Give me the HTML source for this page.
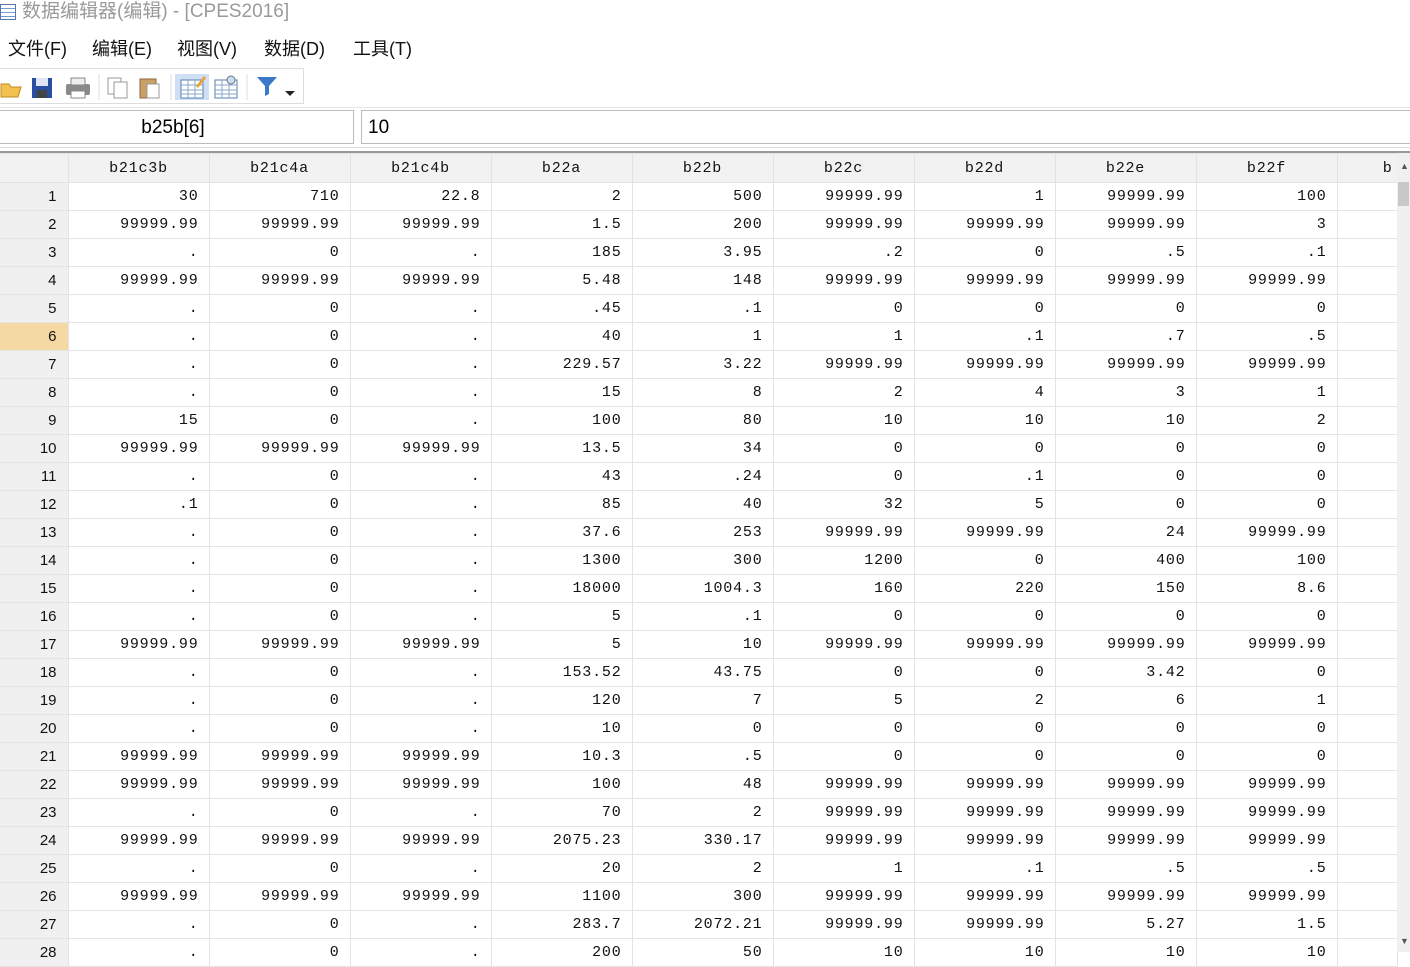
<!DOCTYPE html>
<html><head><meta charset="utf-8"><style>
*{margin:0;padding:0;box-sizing:border-box}
body{width:1410px;height:952px;overflow:hidden;background:#fff;font-family:"Liberation Sans","Noto Sans CJK SC",sans-serif;position:relative}
.title{position:absolute;left:0;top:0;height:24px;font-size:19px;color:#9a9a9a;line-height:24px}
.title .ic{position:absolute;left:0;top:4px;width:16px;height:16px;border:1px solid #5577aa;background:repeating-linear-gradient(#fff 0 3px,#7799cc 3px 4px)}
.title span{position:absolute;left:22px;white-space:nowrap}
.menu{position:absolute;top:35px;left:0;font-size:18px;color:#111;white-space:nowrap}
.menu span{position:absolute}
.tb{position:absolute;left:-2px;top:68px;width:306px;height:36px;border:1px solid #ddd;background:#fff}
.ico{position:absolute}
.inp{position:absolute;top:110px;height:34px;border:1px solid #bbb;background:#fff;font-size:19px;line-height:34px}
.sep{position:absolute;left:0;width:1410px;height:1px}
table{position:absolute;left:0;top:153px;border-collapse:collapse;table-layout:fixed;font-family:"Liberation Mono",monospace;font-size:15px;letter-spacing:0.8px}
td{height:28px;border:1px solid #e3e3e3;text-align:right;padding-right:10px;color:#111;white-space:nowrap;overflow:hidden}
td:first-child{background:#f0f0f0;font-family:"Liberation Sans",sans-serif;font-size:15px;letter-spacing:0;padding-right:11px;border-left:none}
tr.h td{background:#f2f2f2;text-align:center;height:29px;padding:0}
tr.h td:last-child{text-align:right;padding-right:4px}
tr.sel td:first-child{background:#f5d9a3}
.sb{position:absolute;left:1397px;top:153px;width:13px;height:799px;background:#f0f0f0}
</style></head><body>
<div class="title"><div class="ic"></div><span>数据编辑器(编辑) - [CPES2016]</span></div>
<div class="menu"><span style="left:8px">文件(F)</span><span style="left:92px">编辑(E)</span><span style="left:177px">视图(V)</span><span style="left:264px">数据(D)</span><span style="left:353px">工具(T)</span></div>
<div class="tb">
<svg class="ico" style="left:0;top:5px" width="300" height="26" viewBox="0 0 300 26">
<path d="M2 10h8l2 3h10l-3 10H2z" fill="#f2c14e" stroke="#c08a20"/>
<rect x="33" y="4" width="20" height="20" fill="#2b4fa0"/><rect x="37" y="4" width="12" height="8" fill="#dfe6f5"/><rect x="38" y="16" width="10" height="8" fill="#444"/>
<rect x="67" y="10" width="24" height="11" rx="2" fill="#8a8a8a"/><rect x="72" y="4" width="14" height="7" fill="#eee" stroke="#888"/><rect x="72" y="17" width="14" height="7" fill="#fff" stroke="#888"/>
<line x1="100" y1="0" x2="100" y2="26" stroke="#ddd"/>
<rect x="109" y="4" width="13" height="16" fill="#fff" stroke="#999"/><rect x="115" y="8" width="13" height="16" fill="#fff" stroke="#999"/>
<rect x="141" y="5" width="16" height="19" fill="#c9a066" stroke="#8a6a3a"/><rect x="148" y="10" width="12" height="14" fill="#fff" stroke="#999"/>
<line x1="172" y1="0" x2="172" y2="26" stroke="#ddd"/>
<rect x="176" y="-4" width="34" height="34" fill="#cfe0f5"/>
<rect x="182" y="6" width="22" height="18" fill="#fff" stroke="#5a7fb0"/><path d="M182 11h22M182 16h22M182 20h22M189 6v18M196 6v18" stroke="#8aa6cc"/><path d="M197 12l8-10 2 2-8 10z" fill="#e8a23a"/>
<rect x="216" y="6" width="22" height="18" fill="#fff" stroke="#5a7fb0"/><path d="M216 11h22M216 16h22M216 20h22M223 6v18M230 6v18" stroke="#8aa6cc"/><circle cx="232" cy="6" r="4" fill="#cde" stroke="#678"/>
<line x1="248" y1="0" x2="248" y2="26" stroke="#ddd"/>
<path d="M258 3h20l-8 9v8l-4 2v-10z" fill="#3a78c8"/><path d="M286 17h10l-5 5z" fill="#222"/>
</svg></div>
<div class="inp" style="left:-2px;width:356px;text-align:center;padding-right:6px">b25b[6]</div>
<div class="inp" style="left:361px;width:1060px;padding-left:6px">10</div>
<div class="sep" style="top:107px;background:#e6e6e6"></div>
<div class="sep" style="top:147px;background:#ddd"></div>
<div class="sep" style="top:151px;background:#999;height:2px"></div>
<table>
<colgroup><col style="width:68px"><col style="width:141px"><col style="width:141px"><col style="width:141px"><col style="width:141px"><col style="width:141px"><col style="width:141px"><col style="width:141px"><col style="width:141px"><col style="width:141px"><col style="width:60px"></colgroup>
<tr class="h"><td></td><td>b21c3b</td><td>b21c4a</td><td>b21c4b</td><td>b22a</td><td>b22b</td><td>b22c</td><td>b22d</td><td>b22e</td><td>b22f</td><td>b</td></tr>
<tr><td>1</td><td>30</td><td>710</td><td>22.8</td><td>2</td><td>500</td><td>99999.99</td><td>1</td><td>99999.99</td><td>100</td><td></td></tr>
<tr><td>2</td><td>99999.99</td><td>99999.99</td><td>99999.99</td><td>1.5</td><td>200</td><td>99999.99</td><td>99999.99</td><td>99999.99</td><td>3</td><td></td></tr>
<tr><td>3</td><td>.</td><td>0</td><td>.</td><td>185</td><td>3.95</td><td>.2</td><td>0</td><td>.5</td><td>.1</td><td></td></tr>
<tr><td>4</td><td>99999.99</td><td>99999.99</td><td>99999.99</td><td>5.48</td><td>148</td><td>99999.99</td><td>99999.99</td><td>99999.99</td><td>99999.99</td><td></td></tr>
<tr><td>5</td><td>.</td><td>0</td><td>.</td><td>.45</td><td>.1</td><td>0</td><td>0</td><td>0</td><td>0</td><td></td></tr>
<tr class="sel"><td>6</td><td>.</td><td>0</td><td>.</td><td>40</td><td>1</td><td>1</td><td>.1</td><td>.7</td><td>.5</td><td></td></tr>
<tr><td>7</td><td>.</td><td>0</td><td>.</td><td>229.57</td><td>3.22</td><td>99999.99</td><td>99999.99</td><td>99999.99</td><td>99999.99</td><td></td></tr>
<tr><td>8</td><td>.</td><td>0</td><td>.</td><td>15</td><td>8</td><td>2</td><td>4</td><td>3</td><td>1</td><td></td></tr>
<tr><td>9</td><td>15</td><td>0</td><td>.</td><td>100</td><td>80</td><td>10</td><td>10</td><td>10</td><td>2</td><td></td></tr>
<tr><td>10</td><td>99999.99</td><td>99999.99</td><td>99999.99</td><td>13.5</td><td>34</td><td>0</td><td>0</td><td>0</td><td>0</td><td></td></tr>
<tr><td>11</td><td>.</td><td>0</td><td>.</td><td>43</td><td>.24</td><td>0</td><td>.1</td><td>0</td><td>0</td><td></td></tr>
<tr><td>12</td><td>.1</td><td>0</td><td>.</td><td>85</td><td>40</td><td>32</td><td>5</td><td>0</td><td>0</td><td></td></tr>
<tr><td>13</td><td>.</td><td>0</td><td>.</td><td>37.6</td><td>253</td><td>99999.99</td><td>99999.99</td><td>24</td><td>99999.99</td><td></td></tr>
<tr><td>14</td><td>.</td><td>0</td><td>.</td><td>1300</td><td>300</td><td>1200</td><td>0</td><td>400</td><td>100</td><td></td></tr>
<tr><td>15</td><td>.</td><td>0</td><td>.</td><td>18000</td><td>1004.3</td><td>160</td><td>220</td><td>150</td><td>8.6</td><td></td></tr>
<tr><td>16</td><td>.</td><td>0</td><td>.</td><td>5</td><td>.1</td><td>0</td><td>0</td><td>0</td><td>0</td><td></td></tr>
<tr><td>17</td><td>99999.99</td><td>99999.99</td><td>99999.99</td><td>5</td><td>10</td><td>99999.99</td><td>99999.99</td><td>99999.99</td><td>99999.99</td><td></td></tr>
<tr><td>18</td><td>.</td><td>0</td><td>.</td><td>153.52</td><td>43.75</td><td>0</td><td>0</td><td>3.42</td><td>0</td><td></td></tr>
<tr><td>19</td><td>.</td><td>0</td><td>.</td><td>120</td><td>7</td><td>5</td><td>2</td><td>6</td><td>1</td><td></td></tr>
<tr><td>20</td><td>.</td><td>0</td><td>.</td><td>10</td><td>0</td><td>0</td><td>0</td><td>0</td><td>0</td><td></td></tr>
<tr><td>21</td><td>99999.99</td><td>99999.99</td><td>99999.99</td><td>10.3</td><td>.5</td><td>0</td><td>0</td><td>0</td><td>0</td><td></td></tr>
<tr><td>22</td><td>99999.99</td><td>99999.99</td><td>99999.99</td><td>100</td><td>48</td><td>99999.99</td><td>99999.99</td><td>99999.99</td><td>99999.99</td><td></td></tr>
<tr><td>23</td><td>.</td><td>0</td><td>.</td><td>70</td><td>2</td><td>99999.99</td><td>99999.99</td><td>99999.99</td><td>99999.99</td><td></td></tr>
<tr><td>24</td><td>99999.99</td><td>99999.99</td><td>99999.99</td><td>2075.23</td><td>330.17</td><td>99999.99</td><td>99999.99</td><td>99999.99</td><td>99999.99</td><td></td></tr>
<tr><td>25</td><td>.</td><td>0</td><td>.</td><td>20</td><td>2</td><td>1</td><td>.1</td><td>.5</td><td>.5</td><td></td></tr>
<tr><td>26</td><td>99999.99</td><td>99999.99</td><td>99999.99</td><td>1100</td><td>300</td><td>99999.99</td><td>99999.99</td><td>99999.99</td><td>99999.99</td><td></td></tr>
<tr><td>27</td><td>.</td><td>0</td><td>.</td><td>283.7</td><td>2072.21</td><td>99999.99</td><td>99999.99</td><td>5.27</td><td>1.5</td><td></td></tr>
<tr><td>28</td><td>.</td><td>0</td><td>.</td><td>200</td><td>50</td><td>10</td><td>10</td><td>10</td><td>10</td><td></td></tr>
</table>
<div class="sb"><div style="position:absolute;top:29px;left:1px;width:11px;height:24px;background:#c8c8c8"></div><div style="position:absolute;top:8px;left:3px;font-size:9px;color:#555">▲</div><div style="position:absolute;bottom:6px;left:3px;font-size:9px;color:#555">▼</div></div>
</body></html>
